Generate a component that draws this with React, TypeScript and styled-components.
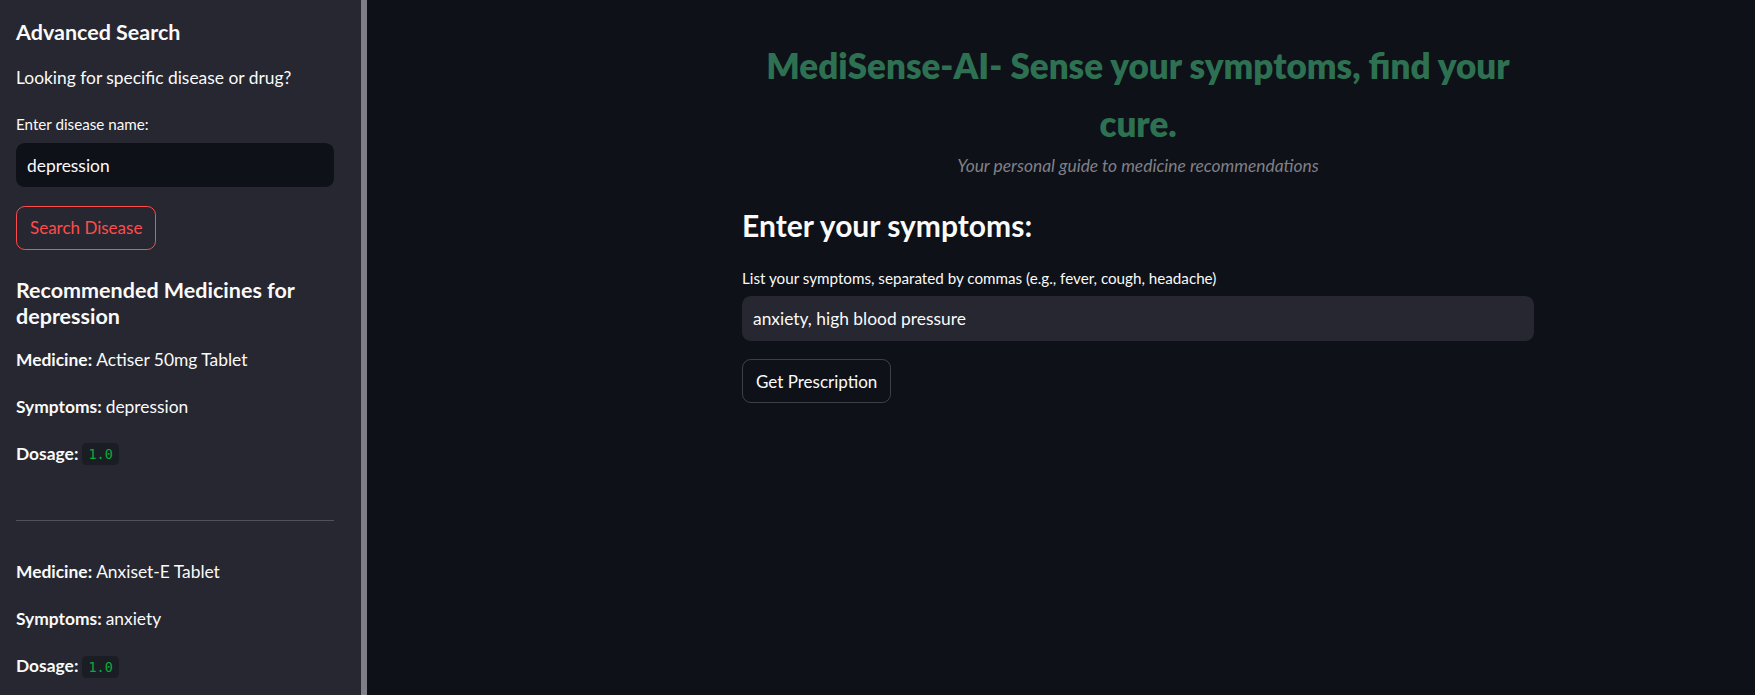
import React from "react";
import styled, { createGlobalStyle } from "styled-components";

const GlobalStyle = createGlobalStyle`
  html, body { margin: 0; padding: 0; background: #0e1117; }
  body { font-family: "Source Sans Pro", Lato, "Noto Sans", sans-serif; color: #fafafa; }
  * { box-sizing: border-box; }
`;

const Shell = styled.div`
  display: flex;
  height: 695px;
  width: 1755px;
  overflow: hidden;
`;

const Sidebar = styled.aside`
  width: 361px;
  flex: 0 0 361px;
  background: #262730;
  padding: 19px 27px 0 16px;
  display: flex;
  flex-direction: column;
`;

const Handle = styled.div`
  width: 6px;
  flex: 0 0 6px;
  background: #7f7f87;
`;

const Main = styled.main`
  flex: 1;
  background: #0e1117;
  padding: 37px 0 0 375px;
`;

const Column = styled.div`
  width: 792px;
  display: flex;
  flex-direction: column;
`;

const SideTitle = styled.h2<{ $mt?: number }>`
  margin: ${(p) => p.$mt ?? 0}px 0 0;
  font-size: 21.5px;
  line-height: 26.4px;
  font-weight: 700;
  color: #fafafa;
`;

const Text = styled.p<{ $mt?: number }>`
  margin: ${(p) => p.$mt ?? 0}px 0 0;
  font-size: 17.4px;
  line-height: 28.2px;
  color: #fafafa;
  display: flex;
  align-items: center;
  gap: 4px;
  white-space: nowrap;
`;

const Strong = styled.strong`
  font-weight: 700;
`;

const Label = styled.label<{ $mt?: number }>`
  display: block;
  margin: ${(p) => p.$mt ?? 0}px 0 0;
  font-size: 15.2px;
  line-height: 22px;
  color: #fafafa;
`;

const Field = styled.div<{ $bg: string }>`
  margin-top: 7.5px;
  height: 44.5px;
  border-radius: 8.8px;
  background: ${(p) => p.$bg};
  display: flex;
  align-items: center;
  padding: 0 11px;
  font-size: 17.4px;
  color: #fafafa;
`;

const Button = styled.button<{ $danger?: boolean }>`
  margin-top: 18.3px;
  align-self: flex-start;
  height: 44.5px;
  padding: 0 13px;
  border-radius: 8.8px;
  background: transparent;
  border: 1px solid ${(p) => (p.$danger ? "#ff4b4b" : "rgba(250,250,250,0.2)")};
  color: ${(p) => (p.$danger ? "#ff4b4b" : "#fafafa")};
  font-family: inherit;
  font-size: 17px;
  line-height: 1;
`;

const Code = styled.code`
  font-family: "DejaVu Sans Mono", "Liberation Mono", monospace;
  font-size: 13.5px;
  color: #09ab3b;
  background: #1b1d25;
  border-radius: 4.4px;
  padding: 3px 6px;
  line-height: 16px;
`;

const Rule = styled.hr`
  margin: 51.5px 0 0;
  border: none;
  border-top: 1px solid #50515a;
  height: 0;
`;

const Title = styled.h1`
  margin: 0;
  text-align: center;
  font-size: 35px;
  line-height: 57.7px;
  font-weight: 800;
  color: #2d7152;
`;

const Subtitle = styled.p`
  margin: 0;
  text-align: center;
  font-style: italic;
  font-size: 17.4px;
  line-height: 28.2px;
  color: #808088;
`;

const Heading = styled.h3`
  margin: 26.5px 0 0;
  font-size: 30px;
  line-height: 36px;
  font-weight: 700;
  color: #fafafa;
`;

type Med = { name: string; symptoms: string; dosage: string };

const meds: Med[] = [
  { name: "Actiser 50mg Tablet", symptoms: "depression", dosage: "1.0" },
  { name: "Anxiset-E Tablet", symptoms: "anxiety", dosage: "1.0" },
];

const MedBlock: React.FC<{ med: Med; first: boolean }> = ({ med, first }) => (
  <>
    <Text $mt={first ? 16.4 : 37.5}>
      <Strong>Medicine:</Strong> {med.name}
    </Text>
    <Text $mt={18.9}>
      <Strong>Symptoms:</Strong> {med.symptoms}
    </Text>
    <Text $mt={18.9}>
      <Strong>Dosage:</Strong>
      <Code>{med.dosage}</Code>
    </Text>
  </>
);

export default function App() {
  return (
    <>
      <GlobalStyle />
      <Shell>
        <Sidebar>
          <SideTitle>Advanced Search</SideTitle>
          <Text $mt={18.4}>Looking for specific disease or drug?</Text>
          <Label $mt={21.4}>Enter disease name:</Label>
          <Field $bg="#0e1117">depression</Field>
          <Button $danger>Search Disease</Button>
          <SideTitle $mt={26.5}>
            Recommended Medicines for
            <br />
            depression
          </SideTitle>
          <MedBlock med={meds[0]} first />
          <Rule />
          <MedBlock med={meds[1]} first={false} />
        </Sidebar>
        <Handle />
        <Main>
          <Column>
            <Title>
              MediSense-AI- Sense your symptoms, find your
              <br />
              cure.
            </Title>
            <Subtitle>Your personal guide to medicine recommendations</Subtitle>
            <Heading>Enter your symptoms:</Heading>
            <Label $mt={23.5}>
              List your symptoms, separated by commas (e.g., fever, cough, headache)
            </Label>
            <Field $bg="#262730">anxiety, high blood pressure</Field>
            <Button>Get Prescription</Button>
          </Column>
        </Main>
      </Shell>
    </>
  );
}
